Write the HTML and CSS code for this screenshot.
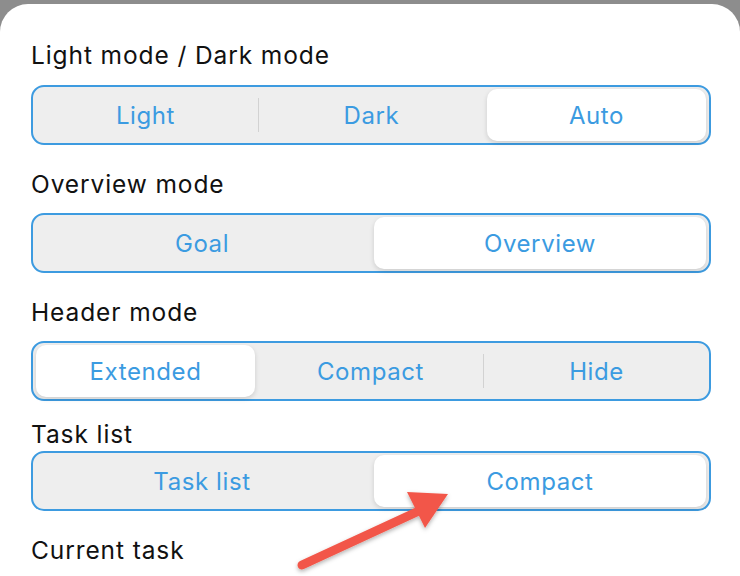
FILE: index.html
```html
<!DOCTYPE html>
<html>
<head>
  <title>Settings</title>
  <link rel="stylesheet" href="styles.css">
</head>
<body>
  <div class="sheet">
    <div class="label first">Light mode / Dark mode</div>
    <div class="segmented">
      <div class="seg">Light</div>
      <span class="sep"></span>
      <div class="seg">Dark</div>
      <div class="seg on">Auto</div>
    </div>

    <div class="label">Overview mode</div>
    <div class="segmented">
      <div class="seg">Goal</div>
      <div class="seg on">Overview</div>
    </div>

    <div class="label">Header mode</div>
    <div class="segmented">
      <div class="seg on">Extended</div>
      <div class="seg">Compact</div>
      <span class="sep"></span>
      <div class="seg">Hide</div>
    </div>

    <div class="label tight">Task list</div>
    <div class="segmented">
      <div class="seg">Task list</div>
      <div class="seg on">Compact</div>
    </div>

    <div class="label">Current task</div>
  </div>

  <!-- annotation arrow drawn over the screenshot -->
  <svg class="arrow" width="740" height="576" viewBox="0 0 740 576">
    <defs>
      <filter id="shadow" x="-20%" y="-20%" width="140%" height="140%">
        <feDropShadow dx="0" dy="2" stdDeviation="2" flood-color="#000" flood-opacity="0.3"/>
      </filter>
    </defs>
    <g filter="url(#shadow)" fill="#f25749">
      <line x1="302" y1="565" x2="421" y2="510" stroke="#f25749" stroke-width="9" stroke-linecap="round"/>
      <polygon points="407,492 448,494 425,528"/>
    </g>
  </svg>
</body>
</html>
```

FILE: styles.css
```css
html, body {
  margin: 0;
  height: 100%;
}
body {
  background-color: #8d8d8d;
  font-family: Inter, "Noto Sans", sans-serif;
  overflow: hidden;
}
.sheet {
  margin-top: 4px;
  height: 100%;
  background-color: #fff;
  border-radius: 28px 28px 0 0;
  padding: 0 29px 0 31px;
}
.label {
  font-size: 24.5px;
  letter-spacing: 0.9px;
  line-height: 30px;
  color: #111;
  margin: 24px 0 14px;
}
.label.first {
  padding-top: 36px;
  margin-top: 0;
  margin-bottom: 15px;
}
.label.tight {
  margin: 18px 0 2px;
}
.segmented {
  display: flex;
  align-items: center;
  height: 56px;
  border: 2px solid #3d9be0;
  border-radius: 13px;
  background-color: #eeeeee;
}
.seg {
  flex: 1;
  align-self: stretch;
  margin: 2px 3px;
  border-radius: 10px;
  display: flex;
  align-items: center;
  justify-content: center;
  font-size: 24px;
  letter-spacing: 0.6px;
  color: #3b9be1;
}
.seg.on {
  background-color: #fff;
  box-shadow: 0 2px 5px rgba(0, 0, 0, 0.14);
}
.sep {
  width: 1px;
  height: 34px;
  background-color: #d2d2d2;
}
.arrow {
  position: absolute;
  top: 0;
  left: 0;
  pointer-events: none;
}
```
